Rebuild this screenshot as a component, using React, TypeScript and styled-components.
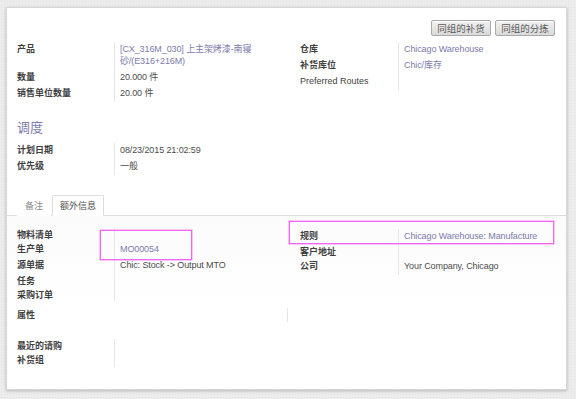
import React from "react";
import styled, { createGlobalStyle } from "styled-components";

const GlobalStyle = createGlobalStyle`
  html, body { margin: 0; padding: 0; }
  body {
    background: #ececec;
    font-family: "Liberation Sans", Arial, "Noto Sans CJK SC", sans-serif;
    font-size: 9px;
    color: #4c4c4c;
  }
  * { box-sizing: border-box; }
`;

const Page = styled.div`
  padding: 7px 9px 9px 6px;
  width: 576px;
  height: 399px;
  background-color: #ececec;
  background-image: radial-gradient(#e4e4e4 0.6px, transparent 0.7px);
  background-size: 3px 3px;
`;

const Sheet = styled.div`
  position: relative;
  width: 561px;
  height: 383px;
  background: #ffffff;
  border: 1px solid #d6d6d6;
  box-shadow: 0 1px 3px rgba(0, 0, 0, 0.22);
`;

const Header = styled.div`
  display: flex;
  justify-content: flex-end;
  gap: 4px;
  padding: 12px 11px 6px 10px;
`;

const Button = styled.button`
  width: 60px;
  height: 16px;
  padding: 0;
  border: 1px solid #a9a9a9;
  border-radius: 2px;
  background: linear-gradient(#f2f2f2, #d9d9d9);
  color: #5a5a5a;
  font-family: "Noto Sans CJK SC", sans-serif;
  font-size: 9.5px;
  line-height: 14px;
  box-shadow: inset 0 1px 0 #fff;
`;

const Columns = styled.div`
  display: grid;
  grid-template-columns: 283px 1fr;
  padding: 0 11px 0 10px;
`;

const Block = styled.div<{ $mt?: number }>`
  padding: 0 11px 0 10px;
  margin-top: ${(p) => p.$mt ?? 0}px;
`;

const SideGroup = styled.div`
  margin-top: 1px;
`;

const FieldTable = styled.div<{ $labelW: number }>`
  display: grid;
  grid-template-columns: ${(p) => p.$labelW}px 1fr;
  align-self: start;
`;

const Label = styled.div<{ $tight?: boolean; $plain?: boolean }>`
  padding: 1px 0 ${(p) => (p.$tight ? 1 : 3)}px 0;
  line-height: 12px;
  font-weight: ${(p) => (p.$plain ? "normal" : "bold")};
  color: #3f3f3f;
`;

const Value = styled.div<{ $tight?: boolean; $link?: boolean }>`
  padding: 1px 6px ${(p) => (p.$tight ? 1 : 3)}px 5px;
  line-height: 12px;
  border-left: 1px solid #e6e6e6;
  color: ${(p) => (p.$link ? "#7c7bad" : "#4c4c4c")};
  letter-spacing: -0.1px;
`;

const Heading = styled.div`
  margin: 17px 0 8px;
  padding-left: 10px;
  height: 16px;
  line-height: 16px;
  font-size: 13px;
  color: #7c7bad;
  font-family: "Noto Sans CJK SC", serif;
`;

const TabNav = styled.div`
  display: flex;
  margin-top: 20px;
  padding-left: 10px;
  border-bottom: 1px solid #dddddd;
`;

const Tab = styled.div<{ $active?: boolean }>`
  height: 21px;
  margin-right: 1px;
  margin-bottom: -1px;
  padding: 0 7px;
  line-height: 20px;
  border: 1px solid ${(p) => (p.$active ? "#dddddd" : "transparent")};
  border-bottom-color: ${(p) => (p.$active ? "#ffffff" : "transparent")};
  border-radius: 2px 2px 0 0;
  background: #fff;
  color: ${(p) => (p.$active ? "#4c4c4c" : "#8a8a8a")};
`;

const TabPanel = styled.div`
  position: relative;
  padding-top: 12px;
  background: linear-gradient(#fbfbfb, #ffffff 90px);
`;

const Annotation = styled.div`
  position: absolute;
  z-index: 2;
  border: 1px solid #f565f5;
  box-shadow: 0 0 0 0.6px rgba(245, 101, 245, 0.6);
  pointer-events: none;
`;

type Field = {
  label: string;
  value?: React.ReactNode;
  link?: boolean;
  tight?: boolean;
  plain?: boolean;
};

function Fields({ labelW, fields }: { labelW: number; fields: Field[] }) {
  return (
    <FieldTable $labelW={labelW}>
      {fields.map((f, i) => (
        <React.Fragment key={i}>
          <Label $tight={f.tight} $plain={f.plain}>
            {f.label}
          </Label>
          <Value $tight={f.tight} $link={f.link}>
            {f.value}
          </Value>
        </React.Fragment>
      ))}
    </FieldTable>
  );
}

export default function App() {
  return (
    <>
      <GlobalStyle />
      <Page>
        <Sheet>
          <Header>
            <Button>同组的补货</Button>
            <Button>同组的分拣</Button>
          </Header>

          <Columns>
            <Fields
              labelW={97}
              fields={[
                {
                  label: "产品",
                  value: (
                    <>
                      [CX_316M_030] 上主架烤漆-南寝
                      <br />
                      砂/(E316+216M)
                    </>
                  ),
                  link: true,
                },
                { label: "数量", value: "20.000 件" },
                { label: "销售单位数量", value: "20.00 件" },
              ]}
            />
            <Fields
              labelW={98}
              fields={[
                { label: "仓库", value: "Chicago Warehouse", link: true },
                { label: "补货库位", value: "Chic/库存", link: true },
                { label: "Preferred Routes", plain: true },
              ]}
            />
          </Columns>

          <Heading>调度</Heading>

          <Columns>
            <Fields
              labelW={97}
              fields={[
                { label: "计划日期", value: "08/23/2015 21:02:59" },
                { label: "优先级", value: "一般" },
              ]}
            />
          </Columns>

          <TabNav>
            <Tab>备注</Tab>
            <Tab $active>额外信息</Tab>
          </TabNav>

          <TabPanel>
            <Columns>
              <Fields
                labelW={97}
                fields={[
                  { label: "物料清单", tight: true },
                  { label: "生产单", value: "MO00054", link: true },
                  { label: "源单据", value: "Chic: Stock -> Output MTO" },
                  { label: "任务", tight: true },
                  { label: "采购订单", tight: true },
                ]}
              />
              <SideGroup>
                <Fields
                  labelW={98}
                  fields={[
                    {
                      label: "规则",
                      value: "Chicago Warehouse: Manufacture",
                      link: true,
                    },
                    { label: "客户地址", tight: true },
                    { label: "公司", value: "Your Company, Chicago" },
                  ]}
                />
              </SideGroup>
            </Columns>

            <Block $mt={6}>
              <Fields labelW={270} fields={[{ label: "属性", tight: true }]} />
            </Block>

            <Block $mt={17}>
              <Fields
                labelW={97}
                fields={[
                  { label: "最近的请购", tight: true },
                  { label: "补货组", tight: true },
                ]}
              />
            </Block>

            <Annotation style={{ left: 93, top: 14, width: 92, height: 30 }} />
            <Annotation style={{ left: 282, top: 5, width: 265, height: 23 }} />
          </TabPanel>
        </Sheet>
      </Page>
    </>
  );
}
